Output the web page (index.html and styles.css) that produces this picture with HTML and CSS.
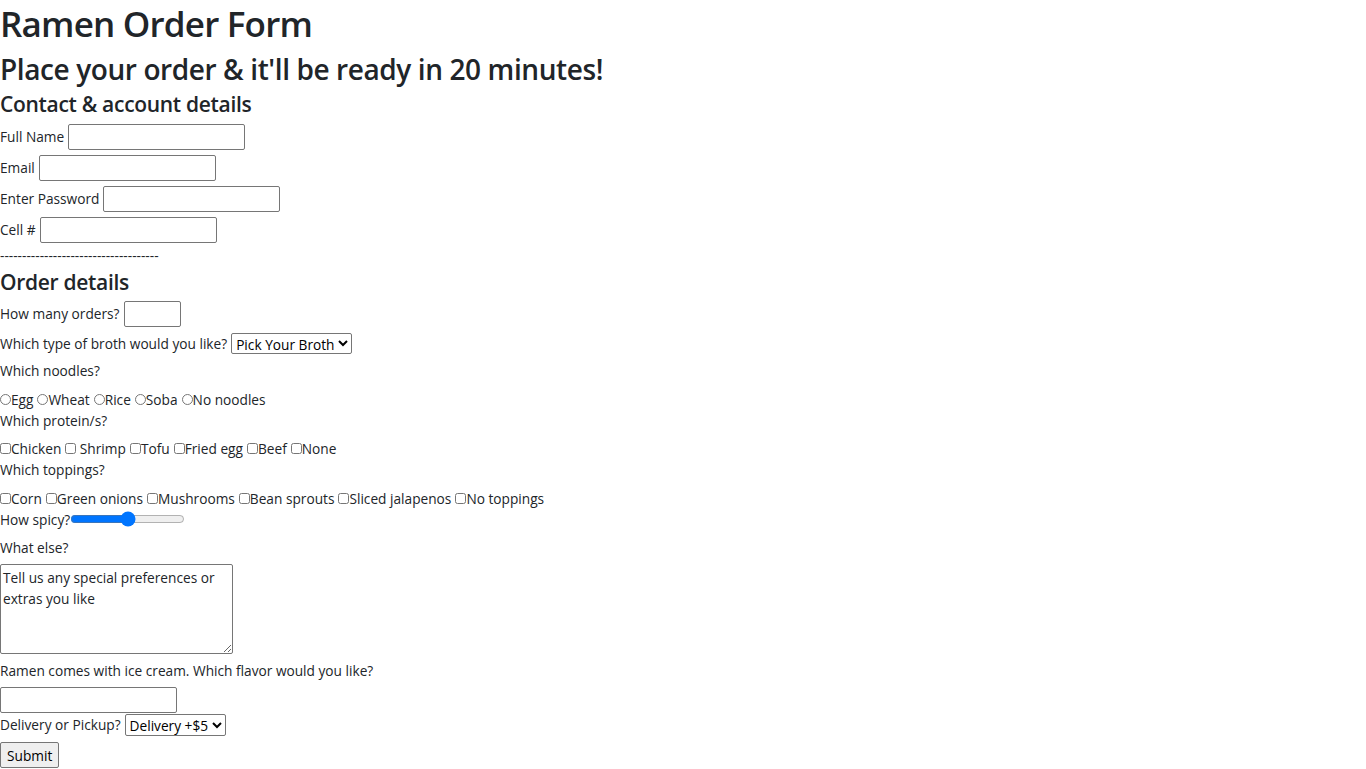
FILE: index.html
```html
<!DOCTYPE html>
<html lang="en">
<head>
<meta charset="utf-8">
<title>Ramen Order Form</title>
<link rel="stylesheet" href="styles.css">
</head>
<body>
<h1 class="title">Ramen Order Form</h1>
<h2 class="subtitle">Place your order &amp; it'll be ready in 20 minutes!</h2>
<form class="form" onsubmit="return false">
  <h3 class="section section-contact">Contact &amp; account details</h3>
  <div class="row"><label for="fullname">Full Name</label><input id="fullname" class="text" type="text"></div>
  <div class="row"><label for="email">Email</label><input id="email" class="text" type="email"></div>
  <div class="row"><label for="pw">Enter Password</label><input id="pw" class="text" type="password"></div>
  <div class="row"><label for="cell">Cell #</label><input id="cell" class="text" type="tel"></div>
  <div class="sep">------------------------------------</div>

  <h3 class="section section-order">Order details</h3>
  <div class="row"><label for="qty">How many orders?</label><input id="qty" class="num" type="number"></div>
  <div class="row row-sel"><label for="broth">Which type of broth would you like?</label><select id="broth" class="sel"><option>Pick Your Broth</option><option>Tonkotsu</option><option>Shoyu</option><option>Miso</option></select></div>

  <div class="q">Which noodles?</div>
  <div class="opts">
    <input type="radio" name="noodle" id="n1"><label for="n1">Egg</label>
    <input type="radio" name="noodle" id="n2"><label for="n2">Wheat</label>
    <input type="radio" name="noodle" id="n3"><label for="n3">Rice</label>
    <input type="radio" name="noodle" id="n4"><label for="n4">Soba</label>
    <input type="radio" name="noodle" id="n5"><label for="n5">No noodles</label>
  </div>

  <div class="q">Which protein/s?</div>
  <div class="opts">
    <input type="checkbox" id="p1"><label for="p1">Chicken</label>
    <input type="checkbox" id="p2"><label for="p2"> Shrimp</label>
    <input type="checkbox" id="p3"><label for="p3">Tofu</label>
    <input type="checkbox" id="p4"><label for="p4">Fried egg</label>
    <input type="checkbox" id="p5"><label for="p5">Beef</label>
    <input type="checkbox" id="p6"><label for="p6">None</label>
  </div>

  <div class="q">Which toppings?</div>
  <div class="opts">
    <input type="checkbox" id="t1"><label for="t1">Corn</label>
    <input type="checkbox" id="t2"><label for="t2">Green onions</label>
    <input type="checkbox" id="t3"><label for="t3">Mushrooms</label>
    <input type="checkbox" id="t4"><label for="t4">Bean sprouts</label>
    <input type="checkbox" id="t5"><label for="t5">Sliced jalapenos</label>
    <input type="checkbox" id="t6"><label for="t6">No toppings</label>
  </div>

  <div class="spicy"><label for="spice">How spicy?</label><input id="spice" class="range" type="range" min="0" max="10" value="5"></div>

  <div class="q q-area">What else?</div>
  <textarea class="area" placeholder="Tell us any special preferences or extras you like"></textarea>

  <div class="q q-tight">Ramen comes with ice cream. Which flavor would you like?</div>
  <input class="text flavor" type="text">
  <div class="row row-del"><label for="del">Delivery or Pickup?</label><select id="del" class="sel sel-del"><option>Delivery +$5</option><option>Pickup</option></select></div>
  <button class="btn" type="submit">Submit</button>
</form>
</body>
</html>
```

FILE: styles.css
```css
* { box-sizing: border-box; }

html, body {
  margin: 0;
  padding: 0;
  background: #fff;
}

body {
  font-family: "Open Sans", "Noto Sans", sans-serif;
  font-size: 13.7px;
  line-height: 21px;
  color: #212529;
}

.title {
  margin: 0;
  font-size: 35px;
  line-height: 48px;
  font-weight: 600;
  letter-spacing: -0.8px;
}

.subtitle {
  margin: 1px 0 0;
  font-size: 28px;
  line-height: 40px;
  font-weight: 600;
  letter-spacing: -0.4px;
}

.section {
  margin: 4px 0 3px;
  font-size: 21px;
  line-height: 29px;
  font-weight: 600;
  letter-spacing: -0.3px;
}

.section-contact { margin-top: 1px; margin-bottom: 2px; }
.section-order { margin-bottom: 1px; }

.form {
  display: block;
}

.row {
  display: flex;
  align-items: center;
  gap: 4px;
  height: 31px;
}

.row-sel { height: 28px; margin-bottom: 3px; }
.row-del { height: 23px; margin-bottom: 6px; }

.text {
  width: 177px;
  height: 26px;
  margin: 0;
  padding: 1px 2px;
  font: inherit;
  border: 1px solid #767676;
  border-radius: 2px;
  background: #fff;
}

.num {
  width: 57px;
  height: 26px;
  margin: 0;
  font: inherit;
  border: 1px solid #767676;
  border-radius: 2px;
}

.sel {
  height: 21px;
  margin: 0;
  font: inherit;
  line-height: 19px;
  color: #000;
  border: 1px solid #767676;
  border-radius: 2px;
  background: #fff;
  padding: 0;
}

.sel-del { height: 22px; }

.sep {
  height: 19px;
  line-height: 21px;
}

.q {
  height: 21px;
  margin-bottom: 7.5px;
}

.q-area { margin-bottom: 6.5px; }

.q-tight { margin-top: 5.5px; margin-bottom: 6.5px; }

.opts {
  display: flex;
  align-items: center;
  height: 21px;
  white-space: pre;
}

.opts input {
  width: 11px;
  height: 11px;
  margin: 0;
}

.opts label + input { margin-left: 4px; }

.spicy {
  display: flex;
  align-items: center;
  height: 21px;
  margin-bottom: 7px;
}

.range {
  width: 115px;
  margin: 0;
}

.area {
  display: block;
  width: 233px;
  height: 90px;
  margin: 0;
  padding: 2px 2px;
  font: inherit;
  line-height: 21px;
  color: #212529;
  border: 1px solid #767676;
  border-radius: 2px;
}

.area::placeholder { color: #212529; opacity: 1; }

.flavor { display: block; }

.btn {
  height: 26px;
  width: 59px;
  margin: 0;
  padding: 0 6px;
  font: inherit;
  color: #000;
  background: #efefef;
  border: 1px solid #767676;
  border-radius: 2px;
}
```
